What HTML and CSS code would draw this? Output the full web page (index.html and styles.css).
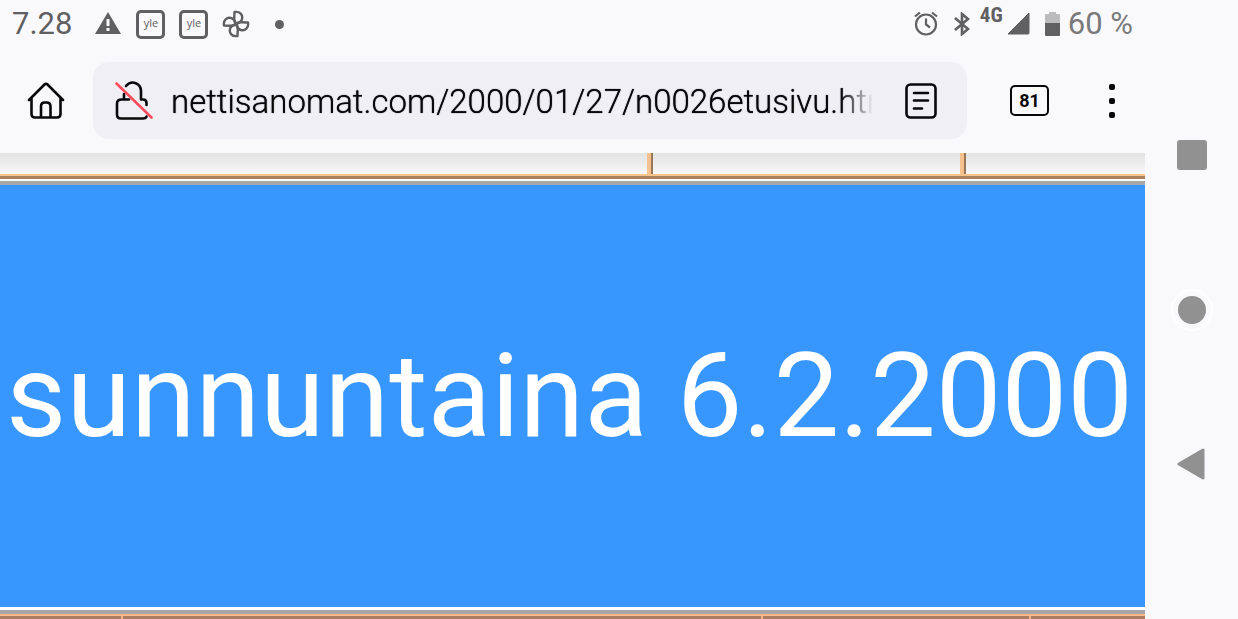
FILE: index.html
```html
<!DOCTYPE html>
<html lang="fi">
<head>
<meta charset="utf-8">
<meta name="viewport" content="width=device-width, initial-scale=1">
<title>sunnuntaina 6.2.2000</title>
<link rel="stylesheet" href="styles.css">
</head>
<body>
<div class="screen">
  <header class="status">
    <span class="clock">7.28</span>
    <svg class="warning" width="28" height="24" viewBox="0 0 28 24"><path d="M14 0 27 22H1Z" fill="#606062"/><path d="M14 7v7M14 16v3" stroke="#f9f9fb" stroke-width="3"/></svg>
    <span class="yle">yle</span>
    <span class="yle">yle</span>
    <svg class="fan" width="28" height="28" viewBox="0 0 28 28" fill="none" stroke="#606062" stroke-width="2.400" stroke-linejoin="round"><path d="M14 14C11 11.500 12.500 9 12.500 2 18 1 21 5 20 9 19.500 12 17 13 14 14"/><path d="M14 14C16.500 11 19 12.500 26 12.500 27 18 23 21 19 20 16 19.500 15 17 14 14"/><path d="M14 14C17 16.500 15.500 19 15.500 26 10 27 7 23 8 19 8.500 16 11 15 14 14"/><path d="M14 14C11.500 17 9 15.500 2 15.500 1 10 5 7 9 8 12 8.500 13 11 14 14"/></svg>
    <span class="dot"></span>
    <div class="system">
      <svg class="alarm" width="24" height="26" viewBox="0 0 24 26" fill="none" stroke="#606062" stroke-width="2.200"><circle cx="12" cy="13.500" r="10"/><path d="M12 7.500v6l4 3M1 5.500l5-4M23 5.500l-5-4"/></svg>
      <svg class="bluetooth" width="16" height="24" viewBox="0 0 16 24" fill="none" stroke="#606062" stroke-width="2.600"><path d="m1 6 13 11-6 5V2l6 5L1 18"/></svg>
      <span class="network">4G</span>
      <svg class="signal" width="23" height="23" viewBox="0 0 23 23"><path d="M22 0v20q0 1-1 1H1Z" fill="#606062" stroke="#606062" stroke-linejoin="round"/></svg>
      <svg class="battery" width="15" height="25" viewBox="0 0 15 25"><path d="M4 0h7v2h3q1 0 1 1v9H0V3q0-1 1-1h3Z" fill="#bcbcbe"/><path d="M0 11h15v12q0 1-1 1H1q-1 0-1-1Z" fill="#606062"/></svg>
      <span class="percent">60 %</span>
    </div>
  </header>

  <nav class="toolbar">
    <button class="icon-button home" aria-label="Koti"><svg width="38" height="38" viewBox="0 0 38 38" fill="none" stroke="#08080a" stroke-width="2.600" stroke-linecap="round" stroke-linejoin="round"><path d="M2 18 17.500 2.500q1.500-1.300 3 0L36 18M4.500 16v16q0 3.500 3.500 3.500h22q3.500 0 3.500-3.500V16M14 35V24.500q0-4 3.500-4h2q4 0 4 4V35"/></svg></button>
    <div class="address">
      <svg class="lock" width="38" height="40" viewBox="0 0 38 40" fill="none" stroke-linecap="round" stroke-linejoin="round"><path d="M9 18.500v-5.500M11 5C17-2 26 3 26 10v8.500h2q3.500 0 3.500 3.500V24M11 18.500H6.500Q2 18.500 2 22.500v11q0 4 4 4h22q3 0 3.500-2M9 18.500h5" stroke="#08080a" stroke-width="2.600"/><path d="m1.500 2.500 35 34" stroke="#ff4d5e" stroke-width="2.600"/></svg>
      <input class="url" type="text" aria-label="Osoite" value="nettisanomat.com/2000/01/27/n0026etusivu.html">
      <button class="icon-button reader" aria-label="Lukunäkymä"><svg width="32" height="36" viewBox="0 0 32 36" fill="none" stroke="#08080a" stroke-width="2.600" stroke-linecap="round"><rect x="1.500" y="1.500" width="29" height="33" rx="4"/><path d="M9 10h14M9 17.500h14M9 25.500h8"/></svg></button>
    </div>
    <button class="tabs" aria-label="81 välilehteä">81</button>
    <button class="icon-button menu" aria-label="Valikko"><svg width="8" height="36" viewBox="0 0 8 36" fill="#08080a"><rect x="1" y="1" width="6" height="6" rx="2"/><rect x="1" y="15" width="6" height="6" rx="2"/><rect x="1" y="29" width="6" height="6" rx="2"/></svg></button>
  </nav>

  <main class="page">
    <div class="row row-top"><span></span><span></span><span></span></div>
    <div class="rule"></div>
    <section class="banner"><h1>sunnuntaina 6.2.2000</h1></section>
    <div class="frame"></div>
    <div class="row row-bottom"><span></span><span></span><span></span><span></span></div>
  </main>
</div>

<aside class="system-nav">
  <button aria-label="Viimeisimmät"><svg width="30" height="30" viewBox="0 0 30 30"><rect width="30" height="30" rx="3" fill="#919191"/></svg></button>
  <button aria-label="Aloitusnäyttö"><svg width="42" height="42" viewBox="0 0 42 42"><circle cx="21" cy="21" r="20" fill="#f9f9fb" stroke="#fdfdfe" stroke-width="2"/><circle cx="21" cy="21" r="14" fill="#919191"/></svg></button>
  <button aria-label="Takaisin"><svg width="30" height="32" viewBox="0 0 30 32"><path d="M2 16 26 2v28Z" fill="#919191" stroke="#919191" stroke-width="3" stroke-linejoin="round"/></svg></button>
</aside>
</body>
</html>
```
FILE: styles.css
```css
* {
  box-sizing: border-box;
}

body {
  display: flex;
  min-height: 100vh;
  margin: 0;
  background: #f9f9fb;
  color: #08080a;
  font-family: Roboto, sans-serif;
}

button {
  padding: 0;
  border: 0;
  background: none;
  color: inherit;
  font-family: inherit;
}

svg {
  display: block;
  flex: none;
}

.screen {
  display: flex;
  flex: 1;
  flex-direction: column;
  min-width: 0;
}

.status {
  display: flex;
  align-items: center;
  height: 48px;
  padding: 0 12px;
  color: #606062;
  font-size: 31px;
  line-height: 50px;
}

.warning {
  margin-left: 22px;
}

.yle {
  width: 29px;
  height: 29px;
  margin-left: 14px;
  border: 3px solid #606062;
  border-radius: 5px;
  font-family: "Open Sans", sans-serif;
  font-size: 11px;
  line-height: 20px;
  text-align: center;
}

.fan {
  margin-left: 14px;
}

.dot {
  width: 9px;
  height: 9px;
  margin-left: 25px;
  border-radius: 50%;
  background: #606062;
}

.system {
  display: flex;
  align-items: center;
  margin-left: auto;
}

.bluetooth {
  margin-left: 16px;
}

.network {
  align-self: flex-start;
  margin: 6px 4px 0 10px;
  font-family: "Roboto Condensed", Roboto, sans-serif;
  font-size: 21px;
  font-weight: 700;
  line-height: 20px;
}

.battery {
  margin: 0 8px 0 15px;
}

.percent {
  color: #7a7a7c;
}

.toolbar {
  display: flex;
  align-items: center;
  height: 105px;
  padding: 0 29px 0 27px;
}

.icon-button {
  flex: none;
}

.address {
  display: flex;
  flex: 1;
  align-items: center;
  height: 77px;
  min-width: 0;
  margin: 0 43px 0 28px;
  padding: 0 30px 0 22px;
  border-radius: 16px;
  background: #f0eff4;
}

.url {
  flex: 1;
  min-width: 0;
  height: 48px;
  margin: 0 32px 0 18px;
  padding: 2px 0 0;
  border: 0;
  background: none;
  color: inherit;
  font-family: inherit;
  font-size: 33px;
  font-weight: 300;
  text-shadow: 0 0 1px #08080a;
  -webkit-mask-image: linear-gradient(to left, transparent, #000 32px);
  mask-image: linear-gradient(to left, transparent, #000 32px);
}

.tabs {
  width: 39px;
  height: 31px;
  margin-right: 59px;
  border: 2px solid #08080a;
  border-radius: 5px;
  font-size: 18px;
  font-weight: 700;
  line-height: 24px;
}

.page {
  display: flex;
  flex: 1;
  flex-direction: column;
}

.row {
  display: grid;
}

.row-top {
  grid-template-columns: 653fr 313fr 179fr;
  height: 21px;
  background: linear-gradient(#e2e2e2, #f8f8f8);
}

.row-top span:not(:last-child) {
  background: linear-gradient(to right, #f4c18f 4px, #987656 4px) right / 6px 100% no-repeat;
}

.rule {
  height: 11px;
  background: linear-gradient(#fac48c 2px, #ab825e 2px 5px, #fff 5px 7px, #a7a7a7 7px);
}

.banner {
  display: flex;
  flex: 1;
  align-items: center;
  padding: 0 6px;
  background: #3896ff;
}

.banner h1 {
  margin: 0;
  color: #fff;
  font-size: 117px;
  font-weight: 400;
  line-height: 140px;
  white-space: nowrap;
}

.frame {
  height: 9px;
  background: linear-gradient(#fff 3px, #a7a7a7 3px 7px, #ffb98b 7px);
}

.row-bottom {
  grid-template-columns: 123fr 640fr 268fr 114fr;
  height: 3px;
  background: #aa7c62;
}

.row-bottom span:not(:last-child) {
  border-right: 2px solid #f4b58c;
}

.system-nav {
  display: flex;
  flex: none;
  flex-direction: column;
  justify-content: center;
  width: 93px;
}

.system-nav button {
  display: flex;
  flex: 0 0 25%;
  align-items: center;
  justify-content: center;
}
```
